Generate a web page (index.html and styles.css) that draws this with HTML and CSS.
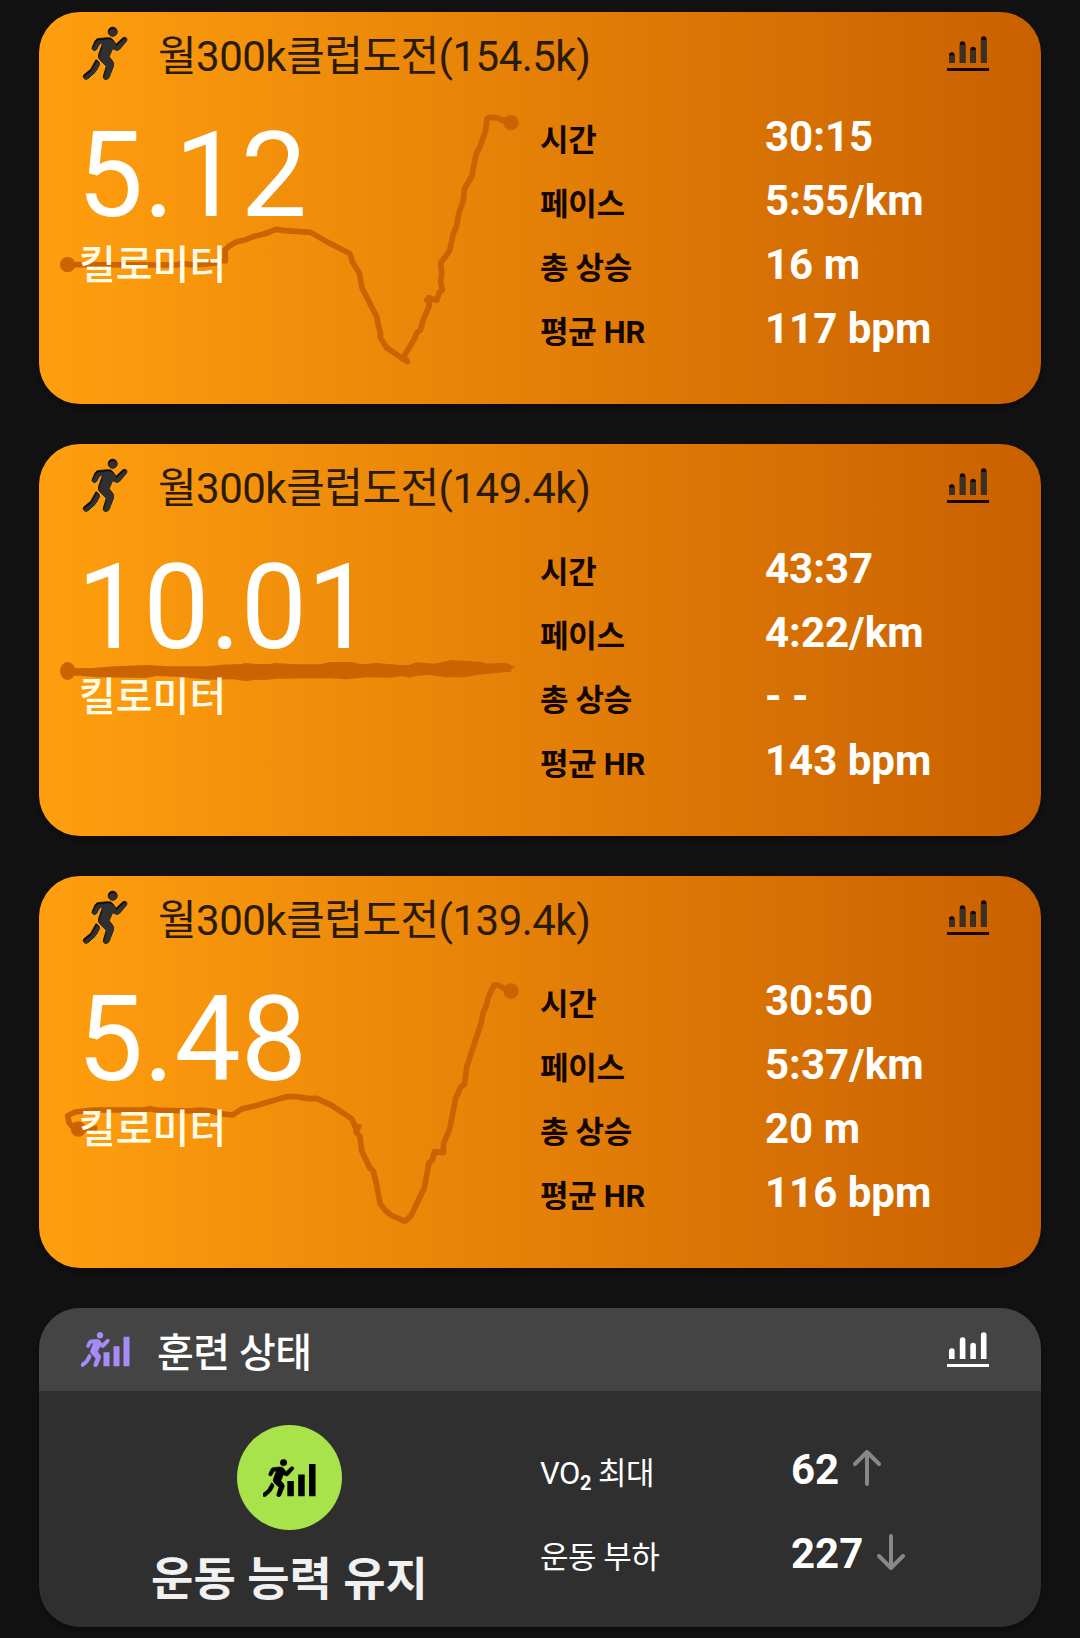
FILE: index.html
```html
<!DOCTYPE html>
<html lang="ko">
<head>
    <meta charset="UTF-8">
    <meta name="viewport" content="width=device-width, initial-scale=1.0">
    <title>내 활동</title>
    <link rel="stylesheet" href="styles.css">
</head>
<body>
    <!-- Shared icons -->
    <svg class="defs" width="0" height="0">
        <defs>
            <g id="runner" stroke-width="2.5" stroke-linejoin="round">
                <circle cx="128" cy="50" r="13.5"/>
                <path d="M72 106 C67 104 65 101 67 96 L75 78 Q77 73 83 71 L112 68 Q124 67 129 75 L138 88 L158 69 Q164 65 169 69 Q173 73 169 79 L148 103 Q142 108 135 104 L128 100 L117 125 L128 139 Q133 146 130 154 L117 187 Q113 195 105 193 Q98 190 100 183 L109 154 L89 134 Q83 127 86 118 L98 85 L89 86 L80 102 Q77 107 72 106 Z"/>
                <path d="M78 134 Q91 141 88 149 Q80 166 74 173 L56 189 Q50 195 43 191 Q38 186 41 180 L62 163 Z"/>
            </g>
            <mask id="runnerShade">
                <use href="#runner" x="2" y="6" fill="#fff" stroke="#fff"/>
            </mask>
            <symbol id="run" viewBox="36 33 144 165">
                <use href="#runner" fill="#0e0a05" stroke="#0e0a05"/>
                <use href="#runner" fill="#303030" stroke="#303030" mask="url(#runnerShade)"/>
            </symbol>
            <symbol id="status" viewBox="32 36 146 105">
                <use href="#runner" fill="currentColor" stroke="currentColor" transform="translate(4 13) scale(.66)"/>
                <path fill="currentColor" d="M99 97h18v42H99zM129 79h18v60h-18zM159 50h18v89h-18z"/>
            </symbol>
            <symbol id="chart" viewBox="0 0 42 36">
                <path fill="currentColor" d="M2 27V19a2.8 2.8 0 0 1 5.6 0V27zM12.8 27V8a2.8 2.8 0 0 1 5.6 0V27zM23.3 27V13.500a2.800 2.800 0 0 1 5.600 0V27zM33.900 27V3a2.800 2.800 0 0 1 5.600 0V27zM0 32h42v3H0z"/>
                <path fill="var(--bar, none)" d="M2 19.500h5.600V27H2zM12.800 9h5.600v18h-5.600zM23.300 14h5.600v13h-5.600zM33.900 4h5.600v23h-5.600z"/>
            </symbol>
        </defs>
    </svg>

    <div class="feed">
        <div class="card activity">
            <svg class="track" viewBox="0 0 1500 930">
                <circle cx="83" cy="494" r="23"/>
                <circle cx="1413" cy="68" r="23"/>
                <path d="M83 494 L410 495 L425 490 L450 494 L490 493 L530 488 L545 482 L556 482 L555 450 L568 438 L590 425 L615 420 L642 409 L672 402 L708 388 L735 392 L812 397 L855 422 L930 461 L937 485 L958 520 L966 563 L1010 650 L1016 680 L1022 700 L1020 711 L1040 743 L1085 774 L1102 784 L1090 772 L1125 714 L1130 698 L1141 690 L1149 662 L1168 617 L1168 604 L1160 600 L1166 593 L1190 601 L1199 576 L1207 570 L1202 545 L1205 522 L1202 489 L1229 452 L1240 401 L1250 378 L1256 342 L1270 302 L1273 267 L1296 228 L1300 202 L1310 157 L1318 145 L1336 95 L1341 56 L1348 52 L1373 54 L1386 61 L1413 60"/>
            </svg>
            <div class="card-header">
                <svg class="icon-run"><use href="#run"/></svg>
                <h2>월300k클럽도전(154.5k)</h2>
                <svg class="icon-chart"><use href="#chart"/></svg>
            </div>
            <div class="card-body">
                <div class="distance">
                    <div class="number">5.12</div>
                    <div class="unit">킬로미터</div>
                </div>
                <dl class="stats">
                    <dt>시간</dt><dd>30:15</dd>
                    <dt>페이스</dt><dd>5:55/km</dd>
                    <dt>총 상승</dt><dd>16 m</dd>
                    <dt>평균 HR</dt><dd>117 bpm</dd>
                </dl>
            </div>
        </div>

        <div class="card activity">
            <svg class="track" viewBox="0 -324 1500 930">
                <ellipse cx="83" cy="93" rx="23" ry="27"/>
                <path class="solid" d="M83 85 L155 84 L225 79 L325 75 L380 79 L500 79 L545 74 L605 72 L615 69 L650 72 L690 72 L705 69 L770 73 L840 73 L870 66 L935 66 L965 73 L1010 69 L1080 75 L1108 75 L1130 67 L1185 71 L1235 60 L1325 66 L1340 71 L1395 68 L1427 80 L1414 87 L1413 95 L1315 104 L1275 112 L1215 112 L1170 105 L1130 107 L1110 113 L1085 108 L1050 113 L980 112 L915 118 L870 115 L710 116 L675 120 L645 119 L618 124 L580 118 L510 119 L420 111 L350 108 L320 114 L170 112 L120 107 L83 107 Z"/>
            </svg>
            <div class="card-header">
                <svg class="icon-run"><use href="#run"/></svg>
                <h2>월300k클럽도전(149.4k)</h2>
                <svg class="icon-chart"><use href="#chart"/></svg>
            </div>
            <div class="card-body">
                <div class="distance">
                    <div class="number">10.01</div>
                    <div class="unit">킬로미터</div>
                </div>
                <dl class="stats">
                    <dt>시간</dt><dd>43:37</dd>
                    <dt>페이스</dt><dd>4:22/km</dd>
                    <dt>총 상승</dt><dd>- -</dd>
                    <dt>평균 HR</dt><dd>143 bpm</dd>
                </dl>
            </div>
        </div>

        <div class="card activity">
            <svg class="track" viewBox="0 12 1500 930">
                <circle cx="115" cy="507" r="23"/>
                <circle cx="1413" cy="93" r="23"/>
                <path d="M172 505 L115 507 L98 500 L87 488 L83 467 L105 456 L160 450 L310 450 L330 446 L350 450 L445 453 L480 450 L520 454 L540 461 L578 465 L605 447 L640 439 L740 410 L770 410 L805 416 L830 415 L875 436 L936 477 L945 500 L957 500 L948 515 L960 530 L965 572 L990 625 L1000 633 L1010 675 L1020 730 L1035 750 L1055 767 L1095 784 L1113 767 L1153 683 L1167 608 L1177 600 L1183 575 L1210 578 L1211 550 L1229 507 L1247 415 L1263 380 L1273 373 L1281 318 L1323 190 L1330 156 L1338 140 L1345 112 L1362 75 L1376 75 L1391 85 L1413 90"/>
            </svg>
            <div class="card-header">
                <svg class="icon-run"><use href="#run"/></svg>
                <h2>월300k클럽도전(139.4k)</h2>
                <svg class="icon-chart"><use href="#chart"/></svg>
            </div>
            <div class="card-body">
                <div class="distance">
                    <div class="number">5.48</div>
                    <div class="unit">킬로미터</div>
                </div>
                <dl class="stats">
                    <dt>시간</dt><dd>30:50</dd>
                    <dt>페이스</dt><dd>5:37/km</dd>
                    <dt>총 상승</dt><dd>20 m</dd>
                    <dt>평균 HR</dt><dd>116 bpm</dd>
                </dl>
            </div>
        </div>

        <div class="card training">
            <div class="card-header">
                <svg class="icon-status"><use href="#status"/></svg>
                <h2>훈련 상태</h2>
                <svg class="icon-chart"><use href="#chart"/></svg>
            </div>
            <div class="card-body">
                <div class="summary">
                    <div class="badge"><svg><use href="#status"/></svg></div>
                    <div class="state">운동 능력 유지</div>
                </div>
                <dl class="metrics">
                    <dt>VO<sub>2</sub> 최대</dt>
                    <dd>62 <svg class="arrow" viewBox="0 0 28 36"><path d="M14 34V2M2 14L14 2L26 14"/></svg></dd>
                    <dt>운동 부하</dt>
                    <dd>227 <svg class="arrow" viewBox="0 0 28 36"><path d="M14 2V34M2 22L14 34L26 22"/></svg></dd>
                </dl>
            </div>
        </div>
    </div>
</body>
</html>
```
FILE: styles.css
```css
* {
    box-sizing: border-box;
    margin: 0;
    padding: 0;
}

body {
    font-family: Roboto, 'Noto Sans CJK KR', sans-serif;
    background: #121212;
    color: white;
    height: 1638px;
    overflow: hidden;
}

.defs {
    position: absolute;
}

.feed {
    display: flex;
    flex-direction: column;
    gap: 40px;
    padding: 12px 39px 0;
}

.card {
    position: relative;
    border-radius: 41px;
    overflow: hidden;
    box-shadow: 0 3px 6px rgba(0, 0, 0, 0.4);
}

.card-header {
    position: relative;
    display: flex;
    height: 83px;
    padding: 0 52px 0 42px;
}

.card-header h2 {
    flex: 1;
    font-size: 42px;
    font-weight: 400;
    line-height: 89px;
    letter-spacing: -0.52px;
}

.icon-chart {
    width: 42px;
    height: 36px;
    margin-top: 24px;
}

.card-body {
    position: relative;
    display: grid;
    grid-template-columns: 501px 1fr;
}

/* Activity cards */
.activity {
    height: 392px;
    background: linear-gradient(90deg, #ff9f0e, #c96000);
}

.activity h2 {
    color: #2b1a08;
}

.activity .icon-chart {
    --bar: #3d3020;
    color: #160800;
}

.icon-run {
    width: 48px;
    height: 55px;
    margin: 14px 28px 0 1px;
}

.track {
    position: absolute;
    top: 88px;
    left: 1px;
    width: 500px;
    height: 310px;
    fill: #cb6300;
}

.track path {
    fill: none;
    stroke: #cb6300;
    stroke-width: 17;
    stroke-linejoin: round;
}

.track .solid {
    fill: #cb6300;
    stroke: none;
}

.distance {
    padding: 22px 0 0 38px;
}

.number {
    font-size: 118px;
    line-height: 119px;
}

.unit {
    font-size: 40px;
    font-weight: 500;
    line-height: 60px;
    padding-left: 2px;
    color: #fffbe6;
}

.stats {
    display: grid;
    grid-template-columns: 225px 1fr;
    grid-auto-rows: 64px;
    line-height: 64px;
    padding-top: 10px;
}

.stats dt {
    font-size: 31px;
    font-weight: 700;
    color: #140600;
    padding-top: 4px;
    letter-spacing: -0.3px;
}

.stats dd {
    font-size: 42px;
    font-weight: 700;
}

/* Training status */
.training {
    height: 319px;
    background: #2f2f2f;
}

.training .card-header {
    background: #444;
}

.training h2 {
    font-size: 40px;
    font-weight: 500;
    line-height: 91px;
}

.icon-status {
    width: 49px;
    height: 35px;
    margin: 24px 27px 0 0;
    color: #a78bfa;
}

.summary {
    display: flex;
    flex-direction: column;
    align-items: center;
    padding-top: 34px;
}

.badge {
    display: flex;
    align-items: center;
    justify-content: center;
    width: 105px;
    height: 105px;
    border-radius: 50%;
    background: #a9e34b;
    color: black;
}

.badge svg {
    width: 53px;
    height: 38px;
}

.state {
    font-size: 46px;
    font-weight: 700;
    line-height: 60px;
    margin-top: 19px;
    color: #f1f1f1;
}

.metrics {
    display: grid;
    grid-template-columns: 251px 1fr;
    grid-auto-rows: 84px;
    line-height: 84px;
    padding-top: 37px;
}

.metrics dt {
    font-size: 31px;
    padding-top: 4px;
    letter-spacing: -0.5px;
}

.metrics sub {
    font-size: 20px;
    font-weight: 700;
    line-height: 0;
    vertical-align: -6px;
}

.metrics dd {
    font-size: 42px;
    font-weight: 700;
}

.arrow {
    width: 28px;
    height: 36px;
    margin-left: 3px;
    vertical-align: -2px;
    fill: none;
    stroke: #888;
    stroke-width: 4;
    stroke-linecap: round;
    stroke-linejoin: round;
}
```
